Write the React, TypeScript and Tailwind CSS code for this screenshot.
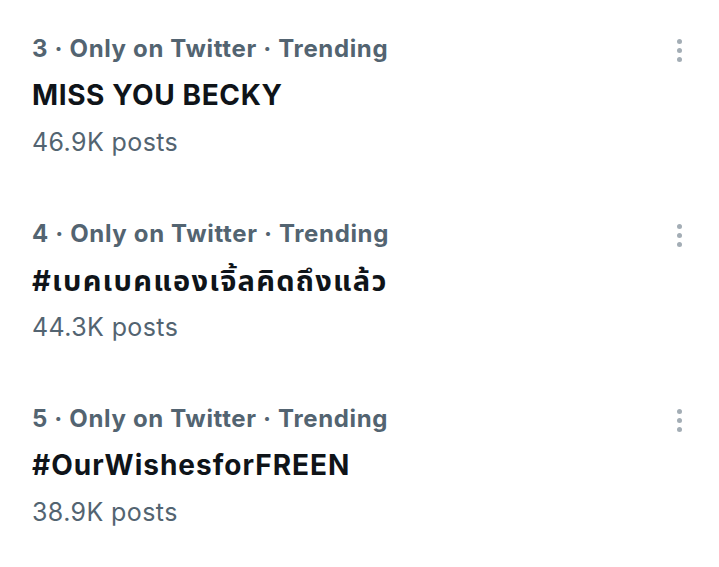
import React from "react";

const items = [
  { n: 3, title: "MISS YOU BECKY", posts: "46.9K posts", cls: "text-[28px] tracking-[0.6px]" },
  { n: 4, title: "#เบคเบคแองเจิ้ลคิดถึงแล้ว", posts: "44.3K posts", cls: "text-[29px] tracking-[1.25px]" },
  { n: 5, title: "#OurWishesforFREEN", posts: "38.9K posts", cls: "text-[28px] tracking-[1px]" },
];

function Dots() {
  return (
    <div className="flex flex-col items-center gap-[4px] pt-[14px]">
      <span className="block w-[5px] h-[5px] rounded-full bg-[#a3adb5]" />
      <span className="block w-[5px] h-[5px] rounded-full bg-[#a3adb5]" />
      <span className="block w-[5px] h-[5px] rounded-full bg-[#a3adb5]" />
    </div>
  );
}

export default function App() {
  return (
    <div
      className="w-[719px] h-[567px] bg-white pt-[25px] overflow-hidden"
      style={{ fontFamily: 'Inter, "Noto Sans", "Noto Sans Thai", sans-serif' }}
    >
      {items.map((it) => (
        <div key={it.n} className="flex pl-[32px] pr-[37px] h-[185px]">
          <div className="flex-1 flex flex-col">
            <div className="text-[24px] leading-[47px] font-bold tracking-[0.65px] text-[#536471] whitespace-nowrap">
              {it.n} · Only on Twitter · Trending
            </div>
            <div className={`${it.cls} leading-[47px] font-bold text-[#0f1419] whitespace-nowrap`}>
              {it.title}
            </div>
            <div className="text-[25px] leading-[47px] tracking-[0.4px] text-[#536471] whitespace-nowrap">
              {it.posts}
            </div>
          </div>
          <Dots />
        </div>
      ))}
    </div>
  );
}
